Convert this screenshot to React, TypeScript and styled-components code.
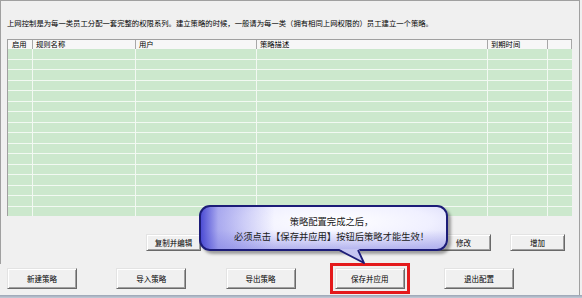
import React from 'react'
import styled, { createGlobalStyle } from 'styled-components'

const GlobalStyle = createGlobalStyle`
  html, body {
    margin: 0;
    padding: 0;
    background: #f0f0f0;
    overflow: hidden;
  }
  body {
    font-family: "Noto Sans CJK SC", "Noto Sans", sans-serif;
    color: #000;
  }
`

const columns = [
  { title: '启用', width: 26 },
  { title: '规则名称', width: 103 },
  { title: '用户', width: 121 },
  { title: '策略描述', width: 231 },
  { title: '到期时间', width: 60 },
  { title: '', width: 24 },
]

const ROW_COUNT = 16

export default function App() {
  return (
    <>
      <GlobalStyle />
      <StyledWindow>
        <StyledPanel>
          <Intro>
            上网控制是为每一类员工分配一套完整的权限系列。建立策略的时候，一般请为每一类（拥有相同上网权限的）员工建立一个策略。
          </Intro>
          <Table>
            <HeaderRow>
              {columns.map((c, i) => (
                <HeaderCell key={i} $width={c.width}>
                  {c.title}
                </HeaderCell>
              ))}
            </HeaderRow>
            <Body>
              {Array.from({ length: ROW_COUNT }).map((_, r) => (
                <Row key={r}>
                  {columns.map((c, i) => (
                    <Cell key={i} $width={c.width} />
                  ))}
                </Row>
              ))}
            </Body>
          </Table>
          <ActionRow>
            <SmallButton>复制并编辑</SmallButton>
            <Spacer />
            <SmallButton>修改</SmallButton>
            <SmallButton>增加</SmallButton>
          </ActionRow>
        </StyledPanel>
        <Footer>
          <BigButton>新建策略</BigButton>
          <BigButton>导入策略</BigButton>
          <BigButton>导出策略</BigButton>
          <BigButton $highlight>保存并应用</BigButton>
          <BigButton>退出配置</BigButton>
        </Footer>
        <BottomBar />
        <Bubble>
          <BubbleLine>策略配置完成之后，</BubbleLine>
          <BubbleLine>必须点击【保存并应用】按钮后策略才能生效！</BubbleLine>
        </Bubble>
        <Tail width="36" height="20" viewBox="0 0 36 20">
          <polygon points="3,2 28,16 23,2" fill="#c4c4f2" />
          <polyline
            points="3,3 28,16 22,3"
            fill="none"
            stroke="#1c1c78"
            strokeWidth="1.8"
            strokeLinejoin="round"
          />
        </Tail>
      </StyledWindow>
    </>
  )
}

const StyledWindow = styled.div`
  position: relative;
  display: flex;
  flex-direction: column;
  width: 579px;
  height: 298px;
  border-right: 1px solid #a0a0a0;
`

const StyledPanel = styled.div`
  display: flex;
  flex-direction: column;
  height: 263px;
  padding: 0 6px;
  border-top: 1px solid #a0a0a0;
  border-left: 1px solid #a0a0a0;
`

const Intro = styled.div`
  margin-top: 17px;
  height: 9px;
  font-size: 7.35px;
  line-height: 9px;
  white-space: nowrap;
`

const Table = styled.div`
  display: flex;
  flex-direction: column;
  margin-top: 12px;
  width: 565px;
  height: 177px;
  border-top: 1px solid #a0a0a0;
  border-left: 1px solid #a0a0a0;
  box-sizing: border-box;
`

const HeaderRow = styled.div`
  display: flex;
  height: 9px;
  background: #f7f7f7;
`

const HeaderCell = styled.div<{ $width: number }>`
  flex: 0 0 ${(p) => p.$width}px;
  box-sizing: border-box;
  padding-left: 3px;
  border-right: 1px solid #a8a8a8;
  font-size: 7.3px;
  line-height: 9px;
  white-space: nowrap;
  overflow: hidden;
  &:first-child {
    flex-basis: ${(p) => p.$width - 1}px;
    padding-left: 4px;
  }
`

const Body = styled.div`
  display: flex;
  flex-direction: column;
  flex: 1;
  background: #cce8cd;
`

const Row = styled.div`
  display: flex;
  flex: 1;
  box-sizing: border-box;
  border-bottom: 1px solid #f2f9f2;
  &:last-child {
    border-bottom: none;
  }
`

const Cell = styled.div<{ $width: number }>`
  flex: 0 0 ${(p) => p.$width}px;
  box-sizing: border-box;
  border-right: 1px solid #f2f9f2;
  &:first-child {
    flex-basis: ${(p) => p.$width - 1}px;
  }
  &:last-child {
    border-right: none;
  }
`

const ActionRow = styled.div`
  display: flex;
  gap: 19px;
  margin-top: 18px;
  padding: 0 8px 0 139px;
`

const Spacer = styled.div`
  flex: 1;
`

const ButtonBase = styled.button`
  box-sizing: border-box;
  padding: 0;
  background: #f0f0f0;
  border: 1px solid;
  border-color: #e3e3e3 #696969 #696969 #e3e3e3;
  box-shadow: inset 1px 1px #ffffff, inset -1px -1px #a0a0a0;
  font-family: "Noto Sans CJK SC", "Noto Sans", sans-serif;
  font-size: 7.5px;
  color: #000;
  white-space: nowrap;
`

const SmallButton = styled(ButtonBase)`
  width: 55px;
  height: 17px;
`

const Footer = styled.div`
  display: flex;
  gap: 39.25px;
  height: 31px;
  padding: 4px 0 0 7px;
  box-sizing: border-box;
`

const BigButton = styled(ButtonBase)<{ $highlight?: boolean }>`
  width: 70px;
  height: 21px;
  outline: ${(p) => (p.$highlight ? '3px solid #e41a1c' : 'none')};
  outline-offset: 2px;
`

const BottomBar = styled.div`
  height: 3px;
  margin-right: -3px;
  background: linear-gradient(#9aa4b4, #c4ccd8);
`

const Bubble = styled.div`
  position: absolute;
  left: 199px;
  top: 205px;
  width: 249px;
  height: 46px;
  box-sizing: border-box;
  display: flex;
  flex-direction: column;
  align-items: center;
  justify-content: center;
  gap: 5px;
  padding-left: 16px;
  border: 2px solid #1c1c78;
  border-radius: 11px;
  background:
    linear-gradient(to right, rgba(70, 70, 210, 0.95) 0%, rgba(130, 130, 230, 0.6) 7%, rgba(255, 255, 255, 0) 30%),
    linear-gradient(to top, rgba(150, 150, 230, 0.55) 0%, rgba(255, 255, 255, 0) 45%),
    radial-gradient(ellipse at 55% 35%, #ffffff 0%, #f0f0ff 50%, #c8c8f4 100%);
  box-shadow: 3px 3px 3px rgba(0, 0, 0, 0.35);
`

const BubbleLine = styled.div`
  font-size: 9.3px;
  line-height: 10px;
  color: #202020;
  white-space: nowrap;
`

const Tail = styled.svg`
  position: absolute;
  left: 336px;
  top: 247px;
`
